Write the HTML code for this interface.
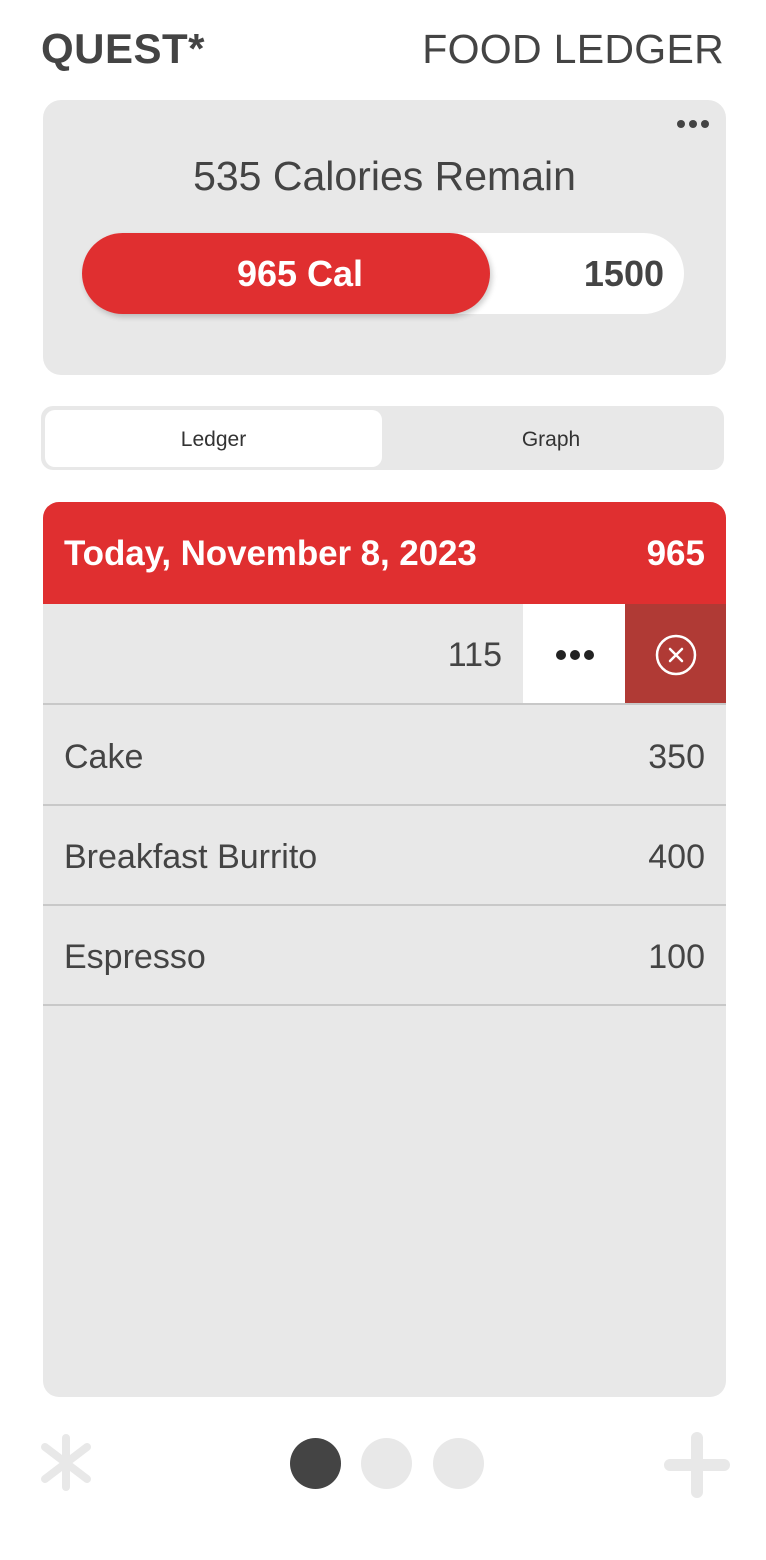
<!DOCTYPE html>
<html><head><style>
*{margin:0;padding:0;box-sizing:border-box}
body{width:766px;height:1560px;background:#fff;font-family:"Liberation Sans",sans-serif;color:#444;position:relative;overflow:hidden}
.a{position:absolute}
</style></head><body>
<div class="a" style="left:41px;top:25px;font-size:42px;font-weight:bold;color:#444;letter-spacing:0.5px">QUEST*</div>
<div class="a" style="right:42px;top:26px;font-size:41px;color:#444;letter-spacing:0.3px">FOOD LEDGER</div>

<div class="a" style="left:43px;top:100px;width:683px;height:275px;background:#e8e8e8;border-radius:18px">
 <div class="a" style="right:17px;top:20px;display:flex;gap:4px"><i style="width:8px;height:8px;border-radius:50%;background:#444;display:block"></i><i style="width:8px;height:8px;border-radius:50%;background:#444;display:block"></i><i style="width:8px;height:8px;border-radius:50%;background:#444;display:block"></i></div>
 <div class="a" style="left:0;width:683px;top:53px;text-align:center;font-size:41px;color:#444">535 Calories Remain</div>
 <div class="a" style="left:39px;top:133px;width:602px;height:81px;background:#fff;border-radius:41px">
  <div class="a" style="right:20px;top:20px;font-size:36px;font-weight:bold;color:#444">1500</div>
  <div class="a" style="left:0;top:0;width:408px;height:81px;background:#e02f30;border-radius:41px;box-shadow:2px 3px 6px rgba(0,0,0,.2);color:#fff;font-size:36px;font-weight:bold;text-align:center;line-height:81px;padding-left:28px">965 Cal</div>
 </div>
</div>

<div class="a" style="left:41px;top:406px;width:683px;height:64px;background:#e8e8e8;border-radius:12px">
 <div class="a" style="left:4px;top:4px;width:337px;height:57px;background:#fff;border-radius:10px;text-align:center;line-height:60px;font-size:21px;color:#333">Ledger</div>
 <div class="a" style="left:341px;top:4px;width:338px;height:57px;text-align:center;line-height:60px;font-size:21px;color:#333">Graph</div>
</div>

<div class="a" style="left:43px;top:502px;width:683px;height:895px;background:#e8e8e8;border-radius:16px;overflow:hidden">
 <div class="a" style="left:0;top:0;width:683px;height:102px;background:#e02f30;color:#fff;font-size:35px;font-weight:bold">
  <span class="a" style="left:21px;top:32px;letter-spacing:-0.1px">Today, November 8, 2023</span><span class="a" style="right:21px;top:32px">965</span></div>
 <div class="a" style="left:0;top:102px;width:683px;height:101px;border-bottom:2px solid #c8c8c8">
  <span class="a" style="right:224px;top:32px;font-size:34px">115</span>
  <div class="a" style="left:480px;top:0;width:102px;height:99px;background:#fff"><div style="display:flex;gap:4px;position:absolute;left:33px;top:46px"><i style="width:10px;height:10px;border-radius:50%;background:#222;display:block"></i><i style="width:10px;height:10px;border-radius:50%;background:#222;display:block"></i><i style="width:10px;height:10px;border-radius:50%;background:#222;display:block"></i></div></div>
  <div class="a" style="left:582px;top:0;width:101px;height:99px;background:#b03a35"><svg class="a" style="left:30px;top:30px" width="42" height="42" viewBox="0 0 42 42"><circle cx="21" cy="21" r="19" fill="none" stroke="#fff" stroke-width="2.5"/><path d="M15 15L27 27M27 15L15 27" stroke="#fff" stroke-width="2.5" stroke-linecap="round"/></svg></div>
 </div>
 <div class="a" style="left:0;top:204px;width:683px;height:100px;border-bottom:2px solid #c8c8c8;font-size:34px"><span class="a" style="left:21px;top:32px">Cake</span><span class="a" style="right:21px;top:32px">350</span></div>
 <div class="a" style="left:0;top:304px;width:683px;height:100px;border-bottom:2px solid #c8c8c8;font-size:34px"><span class="a" style="left:21px;top:32px">Breakfast Burrito</span><span class="a" style="right:21px;top:32px">400</span></div>
 <div class="a" style="left:0;top:404px;width:683px;height:100px;border-bottom:2px solid #c8c8c8;font-size:34px"><span class="a" style="left:21px;top:32px">Espresso</span><span class="a" style="right:21px;top:32px">100</span></div>
</div>

<svg class="a" style="left:0;top:1400px" width="766" height="120" viewBox="0 1400 766 120"><path d="M66 1438V1487M45 1447L87 1479M87 1447L45 1479" stroke="#e8e8e8" stroke-width="8" stroke-linecap="round"/><path d="M697 1438V1492M670 1465H724" stroke="#e8e8e8" stroke-width="12" stroke-linecap="round"/></svg>
<div class="a" style="left:290px;top:1438px;width:51px;height:51px;border-radius:50%;background:#444"></div>
<div class="a" style="left:361px;top:1438px;width:51px;height:51px;border-radius:50%;background:#e8e8e8"></div>
<div class="a" style="left:433px;top:1438px;width:51px;height:51px;border-radius:50%;background:#e8e8e8"></div>
</body></html>
